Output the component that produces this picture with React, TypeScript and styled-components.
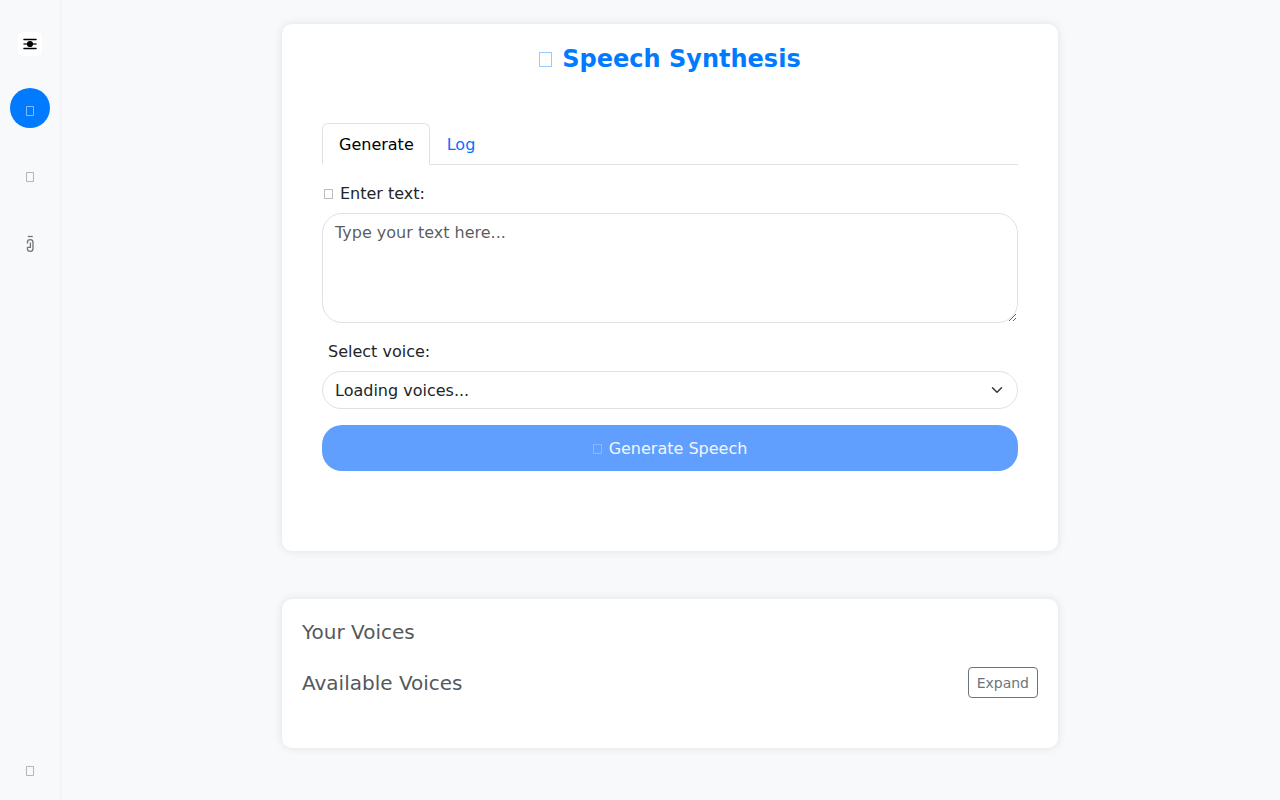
import React from "react";
import styled, { createGlobalStyle, css } from "styled-components";

const GlobalStyle = createGlobalStyle`
  *, *::before, *::after { box-sizing: border-box; }
  body {
    margin: 0;
    background: #f8f9fa;
    color: #212529;
    font-family: "DejaVu Sans", Verdana, sans-serif;
    font-size: 16px;
    line-height: 24px;
  }
  button, select, textarea { font-family: inherit; }
`;

const Page = styled.div`
  display: flex;
  min-height: 100vh;
`;

const Sidebar = styled.nav`
  position: sticky;
  top: 0;
  display: flex;
  flex-direction: column;
  align-items: center;
  flex: none;
  width: 60px;
  height: 100vh;
  padding: 32px 0 10px;
  background: #f8f9fa;
  box-shadow: 2px 0 1px rgba(0, 0, 0, 0.02);
`;

const Logo = styled.div`
  width: 24px;
  height: 24px;
  margin-bottom: 32px;
  border-radius: 5px;
  background: #fff;
  svg { display: block; }
`;

const NavList = styled.div`
  display: flex;
  flex: 1;
  flex-direction: column;
  gap: 28px;
`;

const NavLink = styled.a<{ $active?: boolean }>`
  display: flex;
  align-items: center;
  justify-content: center;
  width: 40px;
  height: 40px;
  padding-top: ${(p) => (p.$active ? 4 : 0)}px;
  border-radius: 50%;
  text-decoration: none;
  color: ${(p) => (p.$active ? "#fff" : "#6c757d")};
  background: ${(p) => (p.$active ? "#007bff" : "transparent")};
`;

const Main = styled.main`
  display: flex;
  flex: 1;
  flex-direction: column;
  gap: 48px;
  max-width: 800px;
  margin: 0 auto;
  padding: 24px 12px;
`;

const Card = styled.section`
  padding: 20px 20px 50px;
  border-radius: 10px;
  background: #fff;
  box-shadow: 0 0 10px rgba(0, 0, 0, 0.1);
`;

const Title = styled.h1`
  display: flex;
  align-items: center;
  justify-content: center;
  gap: 10px;
  margin: 0 0 48px;
  color: #007bff;
  font-size: 24px;
  font-weight: 700;
  line-height: 31px;
`;

const Glyph = styled.span<{ $large?: boolean }>`
  flex: none;
  width: ${(p) => (p.$large ? 13 : 9)}px;
  height: ${(p) => (p.$large ? 15 : 10)}px;
  margin-top: ${(p) => (p.$large ? 0 : -1)}px;
  border: 1px solid currentColor;
  opacity: ${(p) => (p.$large ? 0.4 : 0.3)};
`;

const Body = styled.div`
  padding: 0 20px 30px;
`;

const Tabs = styled.div`
  display: flex;
  margin-bottom: 16px;
  border-bottom: 1px solid #dee2e6;
`;

const Tab = styled.button<{ $active?: boolean }>`
  margin: 0 0 -1px;
  padding: 9px 16px 7px;
  border: 1px solid transparent;
  border-radius: 6px 6px 0 0;
  background: transparent;
  color: #0d6efd;
  font-size: 16px;
  line-height: 24px;
  ${(p) =>
    p.$active &&
    css`
      padding-right: 15px;
      border-color: #dee2e6 #dee2e6 #fff;
      background: #fff;
      color: #000;
    `}
`;

const Field = styled.div`
  margin-bottom: 16px;
`;

const Label = styled.label<{ $indent?: boolean }>`
  display: flex;
  align-items: center;
  gap: 7px;
  margin-bottom: 7px;
  padding: 1px 0 0 ${(p) => (p.$indent ? 6 : 2)}px;
`;

const control = css`
  display: block;
  width: 100%;
  padding: 7px 12px 5px;
  border: 1px solid #dee2e6;
  border-radius: 20px;
  background-color: #fff;
  color: #212529;
  font-size: 16px;
  line-height: 24px;
`;

const TextArea = styled.textarea`
  ${control}
  height: 110px;
  resize: vertical;
  &::placeholder { color: rgba(33, 37, 41, 0.75); opacity: 1; }
`;

const SelectWrap = styled.div`
  position: relative;
  svg {
    position: absolute;
    top: 13px;
    right: 15px;
    pointer-events: none;
  }
`;

const Select = styled.select`
  ${control}
  height: 38px;
  appearance: none;
`;

const Generate = styled.button`
  display: flex;
  align-items: center;
  justify-content: center;
  gap: 7px;
  width: 100%;
  padding: 11px 10px 9px;
  border: 1px solid transparent;
  border-radius: 20px;
  background: #619ffe;
  color: #f0f6ff;
  font-size: 16px;
  line-height: 24px;
`;

const Heading = styled.h2`
  margin: 0;
  color: #55595c;
  font-size: 20px;
  font-weight: 400;
  line-height: 26px;
`;

const VoiceRow = styled.div`
  display: flex;
  align-items: center;
  justify-content: space-between;
  margin-top: 22px;
`;

const Expand = styled.button`
  padding: 5px 8px 3px;
  border: 1px solid #6c757d;
  border-radius: 4px;
  background: transparent;
  color: #6c757d;
  font-size: 14px;
  line-height: 21px;
`;

export default function App() {
  return (
    <>
      <GlobalStyle />
      <Page>
        <Sidebar>
          <Logo>
            <svg width="24" height="24" viewBox="0 0 24 24" stroke="#000" strokeWidth="1.5" strokeLinecap="round">
              <path d="M6 7.4h12M6 16.4h12" />
              <path d="M6 12h12" opacity="0.8" />
              <circle cx="12" cy="12" r="3.1" stroke="none" />
            </svg>
          </Logo>
          <NavList>
            <NavLink href="#speech" aria-label="Speech" $active>
              <NavBox />
            </NavLink>
            <NavLink href="#voices" aria-label="Voices">
              <NavBox />
            </NavLink>
            <NavLink href="#audio" aria-label="Audio">
              <svg width="12" height="20" viewBox="0 0 12 20" fill="none" stroke="currentColor" strokeWidth="1.3">
                <path d="M3.8 2.5h5" />
                <path d="M3.4 9.4V8.4Q3.4 5.7 6.2 5.7Q9 5.7 9 8.4V14.4Q9 17.3 6.2 17.3Q3.4 17.3 3.4 14.8V13.2M6.4 8.4V13.4H3.4" />
              </svg>
            </NavLink>
          </NavList>
          <NavLink href="#settings" aria-label="Settings">
            <NavBox />
          </NavLink>
        </Sidebar>
        <Main>
          <Card>
            <Title>
              <Glyph $large />
              Speech Synthesis
            </Title>
            <Body>
              <Tabs role="tablist">
                <Tab type="button" role="tab" aria-selected="true" $active>Generate</Tab>
                <Tab type="button" role="tab" aria-selected="false">Log</Tab>
              </Tabs>
              <Field>
                <Label htmlFor="text">
                  <Glyph />
                  Enter text:
                </Label>
                <TextArea id="text" placeholder="Type your text here..." />
              </Field>
              <Field>
                <Label htmlFor="voice" $indent>Select voice:</Label>
                <SelectWrap>
                  <Select id="voice">
                    <option>Loading voices...</option>
                  </Select>
                  <svg width="12" height="12" viewBox="0 0 16 16" fill="none" stroke="#343a40" strokeWidth="2" strokeLinecap="round" strokeLinejoin="round">
                    <path d="m2 5 6 6 6-6" />
                  </svg>
                </SelectWrap>
              </Field>
              <Generate type="button" disabled>
                <Glyph />
                Generate Speech
              </Generate>
            </Body>
          </Card>
          <Card>
            <Heading>Your Voices</Heading>
            <VoiceRow>
              <Heading>Available Voices</Heading>
              <Expand type="button">Expand</Expand>
            </VoiceRow>
          </Card>
        </Main>
      </Page>
    </>
  );
}

function NavBox() {
  return (
    <svg width="10" height="12" viewBox="0 0 10 12" fill="none" stroke="currentColor" opacity="0.5">
      <path d="M1.5 2.5h7v9h-7z" />
    </svg>
  );
}
